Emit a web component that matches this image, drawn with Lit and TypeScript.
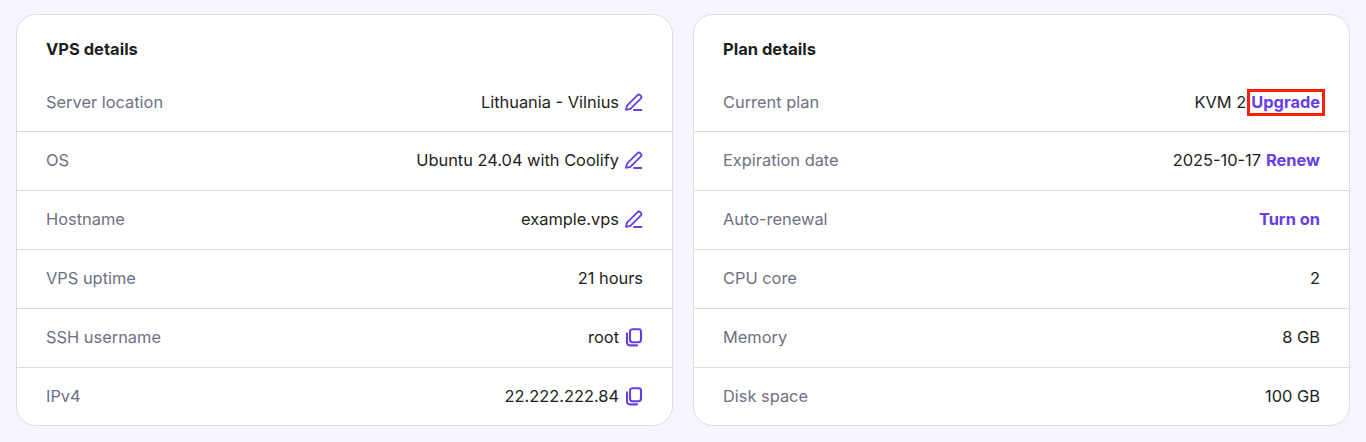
import { html, css, LitElement, nothing } from "lit";
import { customElement } from "lit/decorators.js";

type Icon = "edit" | "copy";

interface Row {
  label: string;
  value?: string;
  icon?: Icon;
  link?: string;
  boxed?: boolean;
}

const vpsRows: Row[] = [
  { label: "Server location", value: "Lithuania - Vilnius", icon: "edit" },
  { label: "OS", value: "Ubuntu 24.04 with Coolify", icon: "edit" },
  { label: "Hostname", value: "example.vps", icon: "edit" },
  { label: "VPS uptime", value: "21 hours" },
  { label: "SSH username", value: "root", icon: "copy" },
  { label: "IPv4", value: "22.222.222.84", icon: "copy" },
];

const planRows: Row[] = [
  { label: "Current plan", value: "KVM 2", link: "Upgrade", boxed: true },
  { label: "Expiration date", value: "2025-10-17", link: "Renew" },
  { label: "Auto-renewal", link: "Turn on" },
  { label: "CPU core", value: "2" },
  { label: "Memory", value: "8 GB" },
  { label: "Disk space", value: "100 GB" },
];

const editIcon = html`<svg width="20" height="20" viewBox="0 0 20 20" fill="none" stroke="currentColor" stroke-width="1.8" stroke-linecap="round" stroke-linejoin="round">
  <path d="M2 17.8 3 13.6 13.3 3.3a2.2 2.2 0 0 1 3.1 0l.3.3a2.2 2.2 0 0 1 0 3.1L6.4 16.9z" />
  <path d="M10 18h7.5" />
</svg>`;

const copyIcon = html`<svg width="20" height="20" viewBox="0 0 20 20" fill="none" stroke="currentColor" stroke-width="2.1" stroke-linecap="round" stroke-linejoin="round">
  <rect x="6" y="2.2" width="11" height="13" rx="2.4" />
  <path d="M3 6.4v9.2a2.8 2.8 0 0 0 2.8 2.8H13" />
</svg>`;

@customElement("app-root")
export class AppRoot extends LitElement {
  static styles = css`
    :host {
      display: block;
      height: 442px;
      box-sizing: border-box;
      padding: 14px 16px 0;
      background: #f4f5ff;
      font-family: Inter, "Liberation Sans", sans-serif;
      color: #1d1e20;
    }

    .cards {
      display: grid;
      grid-template-columns: 1fr 1fr;
      gap: 20px;
    }

    .card {
      height: 412px;
      box-sizing: border-box;
      background: #fff;
      border: 1px solid #dadce0;
      border-radius: 20px;
      overflow: hidden;
    }

    h2 {
      margin: 0;
      height: 58px;
      padding: 10px 29px 0;
      display: flex;
      align-items: center;
      box-sizing: border-box;
      font-size: 16.5px;
      font-weight: 700;
    }

    .row {
      height: 59px;
      box-sizing: border-box;
      padding: 0 29px 2px;
      display: flex;
      align-items: center;
      justify-content: space-between;
      border-bottom: 1px solid #dadce0;
      font-size: 16.4px;
    }

    h2 + .row {
      padding-bottom: 1px;
    }

    .row:last-child {
      height: 57px;
      padding-bottom: 1px;
      border-bottom: none;
    }

    .label {
      color: #6d7081;
    }

    .value {
      display: flex;
      align-items: center;
      gap: 5px;
    }

    .icon {
      display: flex;
      color: #673de6;
      margin-right: -1px;
    }

    a {
      color: #673de6;
      font-weight: 700;
      text-decoration: none;
    }

    a.boxed {
      position: relative;
    }

    /* red marker drawn over the link in the reference */
    a.boxed::after {
      content: "";
      position: absolute;
      inset: -3px -5px -4px -4px;
      border: 3px solid #fa2000;
    }
  `;

  private renderRow(row: Row) {
    return html`<div class="row">
      <span class="label">${row.label}</span>
      <span class="value">
        ${row.value ? html`<span>${row.value}</span>` : nothing}
        ${row.link
          ? html`<a href="#" class=${row.boxed ? "boxed" : ""}>${row.link}</a>`
          : nothing}
        ${row.icon
          ? html`<span class="icon">${row.icon === "edit" ? editIcon : copyIcon}</span>`
          : nothing}
      </span>
    </div>`;
  }

  private renderCard(title: string, rows: Row[]) {
    return html`<section class="card">
      <h2>${title}</h2>
      ${rows.map((row) => this.renderRow(row))}
    </section>`;
  }

  render() {
    return html`<div class="cards">
      ${this.renderCard("VPS details", vpsRows)}
      ${this.renderCard("Plan details", planRows)}
    </div>`;
  }
}
